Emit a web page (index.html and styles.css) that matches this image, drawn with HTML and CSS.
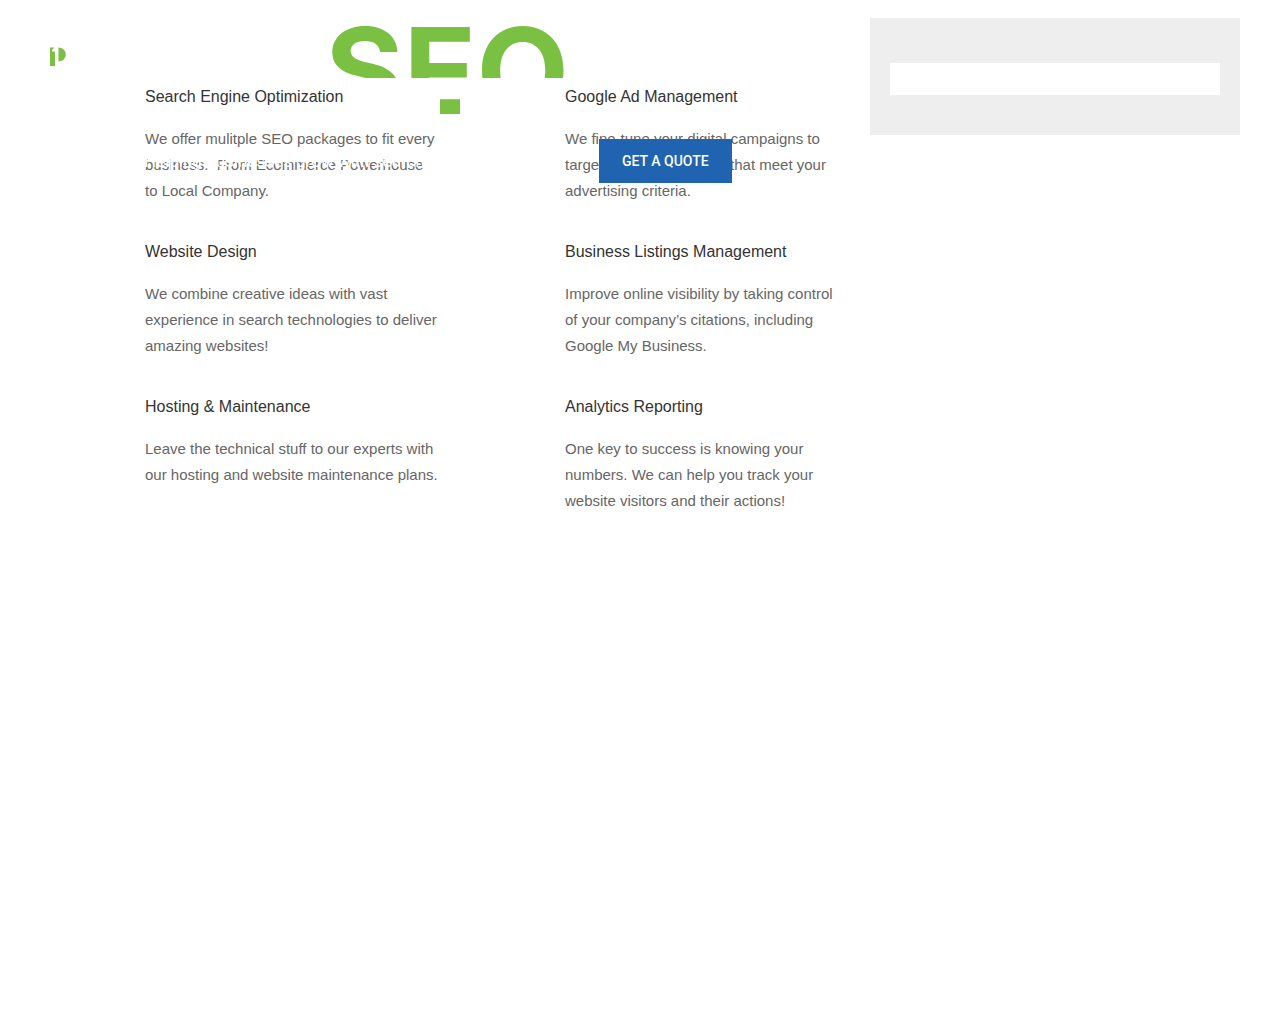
FILE: index.html
```
<!DOCTYPE html>
<html lang="en">
<head>
  <meta charset="UTF-8">
  <meta name="viewport" content="width=device-width, initial-scale=1">
  <title>SEO</title>
  <link rel="stylesheet" href="styles.css">
</head>
<body>
  <header class="site-header">
    <a class="logo" href="#" aria-label="Home">
      <svg width="16" height="20" viewBox="0 0 16 20">
        <path d="M0 0.500H4.500L2 3V4.500H5V19H0Z" fill="#7ac143"/>
        <path d="M8.500 0.500A7.300 7 0 0 1 8.500 14.500Z" fill="#7ac143"/>
      </svg>
    </a>
    <h1 class="hero-title">SEO</h1>
    <p class="tagline">Helping businesses grow with search engine marketing</p>
    <a class="quote-btn" href="#">GET A QUOTE</a>
  </header>

  <main class="content">
    <section class="services">
      <article class="service">
        <h2>Search Engine Optimization</h2>
        <p>We offer mulitple SEO packages to fit every business.&nbsp; From Ecommerce Powerhouse to Local Company.</p>
      </article>
      <article class="service">
        <h2>Website Design</h2>
        <p>We combine creative ideas with vast experience in search technologies to deliver amazing websites!</p>
      </article>
      <article class="service">
        <h2>Hosting &amp; Maintenance</h2>
        <p>Leave the technical stuff to our experts with our hosting and website maintenance plans.</p>
      </article>
    </section>

    <section class="services">
      <article class="service">
        <h2>Google Ad Management</h2>
        <p>We fine-tune your digital campaigns to target certain customers that meet your advertising criteria.</p>
      </article>
      <article class="service">
        <h2>Business Listings Management</h2>
        <p>Improve online visibility by taking control of your company’s citations, including Google My Business.</p>
      </article>
      <article class="service">
        <h2>Analytics Reporting</h2>
        <p>One key to success is knowing your numbers. We can help you track your website visitors and their actions!</p>
      </article>
    </section>

    <form class="search-panel">
      <input type="search" aria-label="Search">
    </form>
  </main>
</body>
</html>
```
FILE: styles.css
```
* {
  box-sizing: border-box;
}
body {
  margin: 0;
  background: #fff;
  color: #666;
  font-family: "Liberation Sans", Arial, sans-serif;
  font-size: 15px;
  line-height: 26px;
}

/* header floats over the page */
.site-header {
  position: absolute;
  top: 0;
  left: 0;
  right: 0;
}
.logo {
  position: absolute;
  top: 47px;
  left: 50px;
  line-height: 0;
}
.hero-title {
  position: absolute;
  top: 0;
  left: 325px;
  margin: 0;
  color: #7ac143;
  font-family: Inter, sans-serif;
  font-size: 120px;
  font-weight: 700;
  line-height: 142px;
}
.tagline {
  position: absolute;
  top: 148px;
  left: 144px;
  z-index: 2;
  margin: 0;
  color: #fff;
  font-family: Roboto, sans-serif;
  font-size: 17px;
  white-space: nowrap;
}
.quote-btn {
  position: absolute;
  top: 139px;
  left: 599px;
  z-index: 3;
  padding: 9px 23px;
  background: #2063b0;
  color: #fff;
  font-family: Roboto, sans-serif;
  font-size: 14px;
  font-weight: 500;
  text-decoration: none;
}

.content {
  display: grid;
  grid-template-columns: 400fr 390fr 370fr;
  column-gap: 20px;
  align-items: start;
  padding: 18px 40px;
}
.services {
  position: relative;
  margin-top: 60px;
  background: #fff;
}
.service {
  min-height: 155px;
  padding: 6px 0 0 105px;
}
.service h2 {
  margin: 0 0 16px;
  color: #333;
  font-size: 16px;
  font-weight: 400;
}
.service p {
  margin: 0;
}
.services + .services .service {
  padding-right: 8px;
}

.search-panel {
  padding: 45px 20px 40px;
  background: #eee;
}
.search-panel input {
  display: block;
  width: 100%;
  height: 32px;
  border: 0;
  background: #fff;
}
```
